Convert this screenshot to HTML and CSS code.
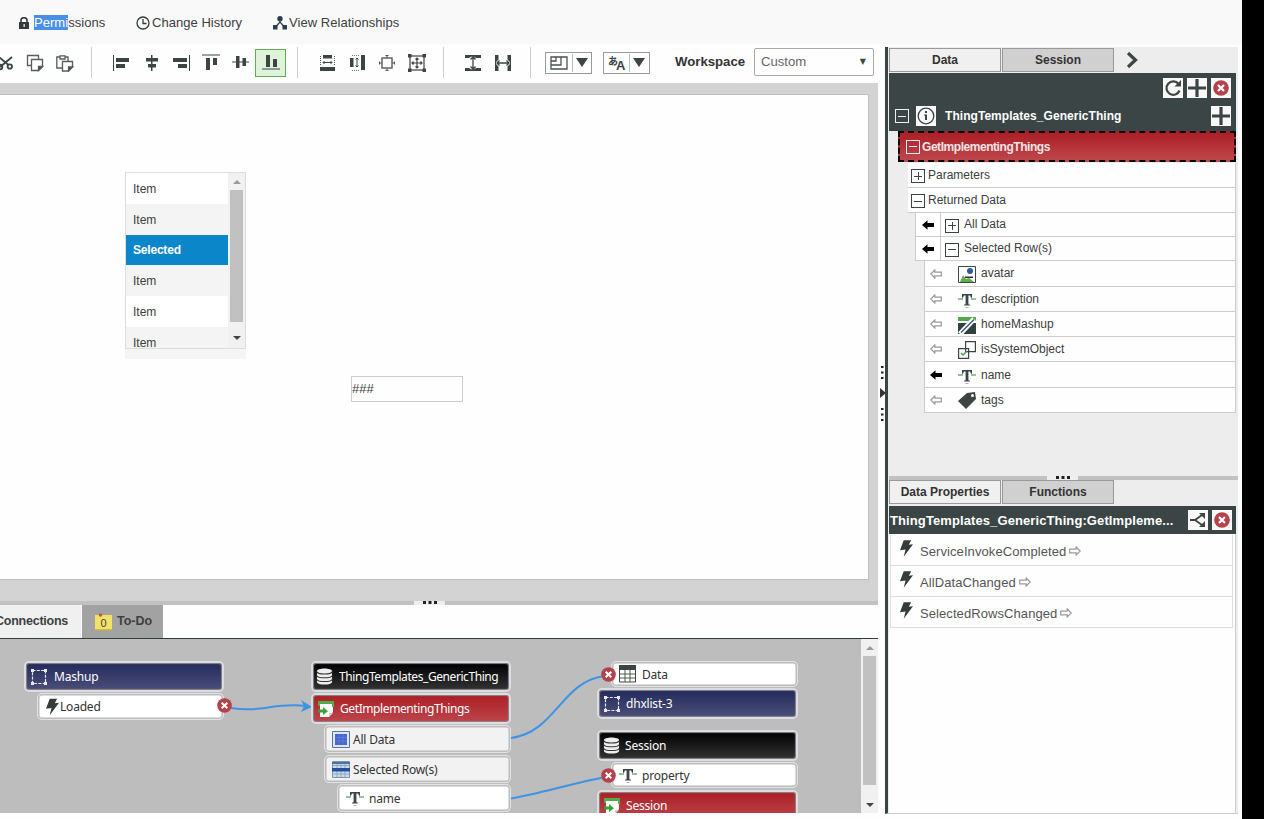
FILE: index.html
```html
<!DOCTYPE html>
<html lang="en">
<head>
  <meta charset="UTF-8" />
  <meta name="viewport" content="width=device-width, initial-scale=1" />
  <title>Mashup Builder</title>
  <link rel="stylesheet" href="styles.css">
</head>
<body>
  <!-- Shared icons -->
  <svg class="sprite" aria-hidden="true">
    <symbol id="i-close" viewBox="0 0 16 16"><circle cx="8" cy="8" r="7.8" fill="#b5414b"/><path d="M5 5l6 6M11 5l-6 6" stroke="#fff" stroke-width="2.2"/></symbol>
    <symbol id="i-plus" viewBox="0 0 20 20"><path d="M1 10h18M10 1v18" stroke="#3c4444" stroke-width="3.2"/></symbol>
    <symbol id="i-bolt" viewBox="0 0 14 18"><path d="M4 0h8L9.500 5l4.500-.6L4 18l2-8-6 1z" fill="#333b3d"/></symbol>
    <symbol id="i-text" viewBox="0 0 18 16"><path d="M0 7h5M13 7h5" stroke="#7fa878" stroke-width="1.400"/><path d="M4 2h10v3.800h-1l-.9-2.200h-1.700v8.600l1.600.5v.9H6v-.9l1.600-.5V3.600H5.900L5 5.800H4z" fill="#3b4547"/><path d="M7.500 15.500h3" stroke="#aaa"/></symbol>
    <symbol id="i-left" viewBox="0 0 12 10"><path d="M0 5l5.500-4.800V3H12v4H5.500v2.800z" fill="#000"/></symbol>
    <symbol id="i-left-o" viewBox="0 0 12 10"><path d="M.8 5l4-4v2.200h6.500v3.600H4.800V9z" fill="#fff" stroke="#999" stroke-width="1.200"/></symbol>
    <symbol id="i-right-o" viewBox="0 0 12 10"><path d="M11.200 5l-4-4v2.200H.7v3.600h6.500V9z" fill="#fff" stroke="#999" stroke-width="1.200"/></symbol>
    <symbol id="i-db" viewBox="0 0 18 18"><path d="M1 3.500C1-.3 17-.3 17 3.500v11c0 4-16 4-16 0z" fill="#eee"/><path d="M1 4c1 3.200 15 3.200 16 0M1 8c1 3.200 15 3.200 16 0M1 12c1 3.200 15 3.200 16 0" fill="none" stroke="#333" stroke-width="1.100"/></symbol>
    <symbol id="i-frame" viewBox="0 0 16 16"><rect x="1.500" y="1.500" width="13" height="13" fill="none" stroke="#e8e8f4" stroke-width="1.200" stroke-dasharray="3 1.300"/><path d="M0 0h3v3H0zM13 0h3v3h-3zM0 13h3v3H0zM13 13h3v3h-3z" fill="#e8e8f4"/></symbol>
    <symbol id="i-service" viewBox="0 0 18 18"><path d="M3 1h13v11l-4 5H3z" fill="#fff"/><path d="M1 1h16v6h-2V4H3v2H1z" fill="#4fae48"/><path d="M1 9.500h5V7l5 4.200L6 15v-2.500H1z" fill="#36a537"/><path d="M12 17v-4h4z" fill="#ccc"/></symbol>
    <symbol id="i-dot3" viewBox="0 0 14 3"><path d="M0 0h3v3H0zM5.500 0h3v3h-3zM11 0h3v3h-3z" fill="#222"/></symbol>
  </svg>

  <div class="app">
    <header class="topbar">
      <a class="toplink permissions">
        <svg width="10" height="12" viewBox="0 0 10 12"><path d="M2 5V3.500C2-.2 8-.2 8 3.500V5" fill="none" stroke="#333" stroke-width="1.500"/><path d="M0 5h10v7H0z" fill="#333b3d"/><path d="M4.500 7h1.300v3H4.500z" fill="#eee"/></svg>
        <span><mark>Permi</mark>ssions</span>
      </a>
      <a class="toplink history">
        <svg width="14" height="14" viewBox="0 0 14 14" fill="none" stroke="#333b3d" stroke-width="1.300"><circle cx="7" cy="7" r="6"/><path d="M7 3v4.500h3.500"/></svg>
        <span>Change History</span>
      </a>
      <a class="toplink relations">
        <svg width="14" height="14" viewBox="0 0 14 14"><path d="M7 3v4M2.500 11L7 6l4.500 5" stroke="#3b4555" stroke-width="1.400" fill="none"/><circle cx="7" cy="2.800" r="2.700" fill="#2d3a4f"/><path d="M0 9h4.500v4.500H0zM9.500 9H14v4.500H9.500z" fill="#2d3a4f"/></svg>
        <span>View Relationships</span>
      </a>
    </header>

    <div class="workarea">
      <section class="builder">
        <div class="toolbar">
          <div class="tools first">
            <button class="tool"><svg width="18" height="18" viewBox="0 0 18 18" fill="none" stroke="#3c4444" stroke-width="1.800"><path d="M3 3l9.500 8M4 13L16 3"/><circle cx="13.800" cy="12.500" r="2.200"/><circle cx="4" cy="13" r="2.300"/></svg></button>
            <button class="tool"><svg width="18" height="18" viewBox="0 0 18 18" fill="#fff" stroke="#555d5e" stroke-width="1.300"><path d="M1.500 1.500h11v10h-11z"/><path d="M5.500 5.500h11v7l-4 4h-7z"/><path d="M12.500 16.500v-4h4z" fill="#3c4444"/></svg></button>
            <button class="tool"><svg width="18" height="18" viewBox="0 0 18 18" fill="#fff" stroke="#555d5e" stroke-width="1.300"><path d="M4 3H.8v11H6M9 3h3v4"/><path d="M4 1.800h5V5H4z"/><path d="M6.500 7.500h10v5.500l-4 4h-6z"/><path d="M12.500 17v-4h4z" fill="#3c4444"/></svg></button>
          </div>
          <div class="tools">
            <button class="tool"><svg width="18" height="18" viewBox="0 0 18 18" fill="#3c4444"><path d="M1 1h1v16H1zM4 4h13v4H4zM4 10h9v4H4z"/></svg></button>
            <button class="tool"><svg width="18" height="18" viewBox="0 0 18 18" fill="#3c4444"><path d="M9 1h1.500v16H9zM4 4h12v3.500H4zM6 10h8v3.500H6z"/></svg></button>
            <button class="tool"><svg width="18" height="18" viewBox="0 0 18 18" fill="#3c4444"><path d="M17 1h1v16h-1zM1 4h14v4H1zM6 10h9v4H6z"/></svg></button>
            <button class="tool"><svg width="18" height="18" viewBox="0 0 18 18" fill="#3c4444"><path d="M0 .5h18v1H0zM4 4h4v12H4zM11 4h4v7h-4z"/></svg></button>
            <button class="tool"><svg width="18" height="18" viewBox="0 0 18 18" fill="#3c4444"><path d="M0 7.500h17v1H0zM4 2h3.500v12H4zM10.500 4H14v8h-3.500z"/></svg></button>
            <button class="tool active"><svg width="18" height="18" viewBox="0 0 18 18" fill="#3c4444"><path d="M0 14.500h18v1H0zM4 1h4v12H4zM11 5h4v8h-4z"/></svg></button>
          </div>
          <div class="tools">
            <button class="tool"><svg width="18" height="18" viewBox="0 0 18 18"><path d="M5 1h9v3.500H5zM2 13h15v4H2z" fill="#3c4444"/><path d="M2.500 2v10M16.500 2v10" stroke="#555" stroke-dasharray="1 1"/><path d="M5 8.500h9M6.500 7L5 8.500 6.500 10M12.500 7L14 8.500 12.500 10" fill="none" stroke="#3c4444"/></svg></button>
            <button class="tool"><svg width="18" height="18" viewBox="0 0 18 18"><path d="M2 4h3.500v9H2zM13 1h4v15h-4z" fill="#3c4444"/><path d="M4 1.500h8M4 16.500h8" stroke="#777" stroke-dasharray="1 1"/><path d="M9 4v9M7.500 5.500L9 4l1.500 1.500M7.500 11.500L9 13l1.500-1.500" fill="none" stroke="#3c4444"/></svg></button>
            <button class="tool"><svg width="18" height="18" viewBox="0 0 18 18"><path d="M4 4h10v10H4z" fill="none" stroke="#666" stroke-width="1.500"/><path d="M9 1v3M9 14v3M1 9h3M14 9h3M7.500 1.500h3M7.500 16.500h3M1.500 7.500v3M16.500 7.500v3" stroke="#555"/></svg></button>
            <button class="tool"><svg width="18" height="18" viewBox="0 0 18 18"><path d="M2 2h14v14H2z" fill="none" stroke="#666" stroke-width="1.500"/><path d="M0 0h3.500v3.500H0zM14.500 0H18v3.500h-3.500zM0 14.500h3.500V18H0zM14.500 14.500H18V18h-3.500z" fill="#3c4444"/><path d="M9 4v10M4 9h10M7.500 5.500L9 4l1.500 1.500M7.500 12.500L9 14l1.500-1.500M5.500 7.500L4 9l1.500 1.500M12.500 7.500L14 9l-1.500 1.500" fill="none" stroke="#3c4444" stroke-width="1.200"/></svg></button>
          </div>
          <div class="tools">
            <button class="tool"><svg width="18" height="18" viewBox="0 0 18 18"><path d="M1 1h16v3h-4.500M1 1v3h4.500M1 17h16v-3h-4.500M1 17v-3h4.500" fill="#555d5e"/><path d="M1 1h16v3h-4L10 2H8L5 4H1zM1 17h16v-3h-4l-3 2H8l-3-2H1z" fill="#3c4444"/><path d="M9 3v12M6.500 5.500L9 3l2.500 2.500M6.500 12.500L9 15l2.500-2.500" fill="none" stroke="#3c4444" stroke-width="1.300"/></svg></button>
            <button class="tool"><svg width="18" height="18" viewBox="0 0 18 18"><path d="M1 1h3.500v4.500L2 8v2l2.500 2.500V17H1zM17 1h-3.500v4.500L16 8v2l-2.500 2.500V17H17z" fill="#3c4444"/><path d="M3 9h12M5.500 6.500L3 9l2.500 2.500M12.500 6.500L15 9l-2.500 2.500" fill="none" stroke="#3c4444" stroke-width="1.300"/></svg></button>
          </div>
          <div class="tools drops">
            <button class="drop">
              <svg width="18" height="14" viewBox="0 0 18 14" fill="none" stroke="#4a5253" stroke-width="1.300"><path d="M1 1h16v12H1z"/><path d="M1 5h5V1M1 9h10V1"/></svg>
              <i></i><b></b>
            </button>
            <button class="drop lang">
              <span>あ</span><span class="latin">A</span>
              <i></i><b></b>
            </button>
          </div>
          <label class="workspace-label">Workspace</label>
          <div class="workspace-select"><span>Custom</span><span class="caret">▼</span></div>
        </div>

        <div class="canvas-wrap">
          <div class="canvas">
            <div class="list-widget">
              <div class="list-view">
                <ul class="items">
                  <li>Item</li>
                  <li>Item</li>
                  <li class="selected">Selected</li>
                  <li>Item</li>
                  <li>Item</li>
                  <li>Item</li>
                </ul>
                <div class="scrollbar"><span class="up"></span><span class="thumb"></span><span class="down"></span></div>
              </div>
            </div>
            <div class="value-widget">###</div>
          </div>
        </div>
        <div class="splitter"><span class="grip"><svg width="14" height="3"><use href="#i-dot3"/></svg></span></div>

        <nav class="bottom-tabs">
          <a class="tab-connections">Connections</a>
          <a class="tab-todo"><svg width="17" height="18" viewBox="0 0 17 18"><path d="M0 2h17v15H0z" fill="#f3e267"/><path d="M0 16h17v1.500H0z" fill="#c9b84b"/><circle cx="5.500" cy="2" r="1.800" fill="#c65b3c"/><text x="5.500" y="14" class="note-count">0</text></svg><span>To-Do</span></a>
        </nav>

        <div class="connections">
          <div class="diagram">
            <svg class="wires" width="861" height="174" viewBox="0 0 861 174" fill="none" stroke="#3f93e6" stroke-width="2">
              <path d="M231 69c30 5 45-6 75-2"/>
              <path d="M301 61l11 7-11 5 3-6z" fill="#3f93e6" stroke="none"/>
              <path d="M511 99c45-6 50-56 93-62"/>
              <path d="M511 159.500c30-5 60-15 93-21"/>
            </svg>
            <div class="node head navy n-mashup"><svg width="16" height="16"><use href="#i-frame"/></svg>Mashup</div>
            <div class="node n-loaded"><svg width="13" height="18"><use href="#i-bolt"/></svg>Loaded</div>
            <div class="node head black n-thing"><svg width="17" height="17"><use href="#i-db"/></svg><span>ThingTemplates_GenericThing</span></div>
            <div class="node head red n-get"><svg width="18" height="18"><use href="#i-service"/></svg>GetImplementingThings</div>
            <div class="node pale n-all"><svg width="18" height="17" viewBox="0 0 18 17"><path d="M.5.500h17v16H.5z" fill="#dce7fb" stroke="#5673a5"/><path d="M3 3h12v11H3z" fill="#4866ce"/><path d="M3 6.500h12M3 10h12M7 3v11M11 3v11" stroke="#6d88e0" stroke-width=".6"/></svg>All Data</div>
            <div class="node pale n-rows"><svg width="18" height="17" viewBox="0 0 18 17"><path d="M.5.500h17v16H.5z" fill="#c9dcea" stroke="#7c94ad"/><path d="M1 4.500h16M1 13h16M5 1v15M9 1v15M13 1v15" stroke="#8fa9bd"/><path d="M0 1h18v2H0z" fill="#4c72a8"/><path d="M0 7h18v3.500H0z" fill="#244f9e"/></svg>Selected Row(s)</div>
            <div class="node n-name"><svg width="18" height="16"><use href="#i-text"/></svg>name</div>
            <div class="node n-data"><svg width="17" height="18" viewBox="0 0 17 18"><path d="M.5 1h16v16H.5z" fill="#fff" stroke="#3c4444"/><path d="M0 0h17v5H0z" fill="#3c4444"/><path d="M1 9h15M1 13h15M6 5v12M11 5v12" stroke="#4b5b4b"/></svg>Data</div>
            <div class="node head navy n-list"><svg width="16" height="16"><use href="#i-frame"/></svg>dhxlist-3</div>
            <div class="node head black n-session"><svg width="17" height="17"><use href="#i-db"/></svg>Session</div>
            <div class="node n-property"><svg width="18" height="16"><use href="#i-text"/></svg>property</div>
            <div class="node head red n-session2"><svg width="18" height="18"><use href="#i-service"/></svg>Session</div>
            <svg class="unlink u-loaded"><use href="#i-close"/></svg>
            <svg class="unlink u-data"><use href="#i-close"/></svg>
            <svg class="unlink u-property"><use href="#i-close"/></svg>
          </div>
          <div class="scrollbar"><span class="up"></span><span class="thumb"></span><span class="down"></span></div>
        </div>
        <div class="side-grip">
          <svg width="6" height="56" viewBox="0 0 6 56"><path d="M1 1h2.500v2H1zM1 6.500h2.500v2H1zM1 12h2.500v2H1zM1 43h2.500v2H1zM1 48.500h2.500v2H1zM1 54h2.500v2H1z" fill="#222"/><path d="M0 23l6 5-6 5z" fill="#3b3333"/></svg>
        </div>
      </section>

      <aside class="panel">
        <div class="data-pane">
          <nav class="tabs">
            <a class="tab current">Data</a>
            <a class="tab">Session</a>
            <svg class="more" width="12" height="16" viewBox="0 0 12 16"><path d="M2 1l7.500 7L2 15" fill="none" stroke="#3c4444" stroke-width="3.200"/></svg>
          </nav>
          <div class="dark-head">
            <div class="actions">
              <button class="sq"><svg width="18" height="18" viewBox="0 0 18 18"><path d="M15.500 11.500A6.700 6.700 0 1 1 14.500 5" fill="none" stroke="#3c4444" stroke-width="2.200"/><path d="M17 1v6.500h-6.500z" fill="#3c4444"/></svg></button>
              <button class="sq"><svg width="20" height="20"><use href="#i-plus"/></svg></button>
              <button class="sq"><svg width="16" height="16"><use href="#i-close"/></svg></button>
            </div>
            <div class="thing">
              <span class="box light"></span>
              <span class="sq info"><svg width="18" height="18" viewBox="0 0 18 18"><circle cx="9" cy="9" r="7.800" fill="none" stroke="#3c4444" stroke-width="1.300"/><path d="M8 4h2v2H8zM7 7.500h3V13H8V8.500H7z" fill="#3c4444"/></svg></span>
              <span class="thing-name">ThingTemplates_GenericThing</span>
              <button class="sq"><svg width="20" height="20"><use href="#i-plus"/></svg></button>
            </div>
          </div>
          <div class="service"><span class="box light"></span>GetImplementingThings</div>
          <div class="tree">
            <div class="row group"><span class="box plus"></span>Parameters</div>
            <div class="row group"><span class="box"></span>Returned Data</div>
            <div class="row sub"><span class="arrow"><svg width="12" height="10"><use href="#i-left"/></svg></span><span class="box plus"></span><span class="label">All Data</span></div>
            <div class="row sub"><span class="arrow"><svg width="12" height="10"><use href="#i-left"/></svg></span><span class="box"></span><span class="label">Selected Row(s)</span></div>
            <div class="row field tall"><svg class="bind" width="12" height="10"><use href="#i-left-o"/></svg><svg class="type" width="18" height="17" viewBox="0 0 18 17"><path d="M.5.500h17v16H.5z" fill="#fff" stroke="#3c4444"/><path d="M2 16l3-7 3 4 3-1 5 4z" fill="#5fae4c"/><circle cx="12" cy="5" r="3" fill="#2b5c93"/><path d="M7 10.500h8V12H7z" fill="#333"/></svg><span class="label">avatar</span></div>
            <div class="row field"><svg class="bind" width="12" height="10"><use href="#i-left-o"/></svg><svg class="type" width="18" height="16"><use href="#i-text"/></svg>description</div>
            <div class="row field"><svg class="bind" width="12" height="10"><use href="#i-left-o"/></svg><svg class="type" width="18" height="17" viewBox="0 0 18 17"><path d="M0 0h18v4H0z" fill="#55aa48"/><path d="M0 6h18v11H0z" fill="#34403f"/><path d="M2 17L16 2" stroke="#fff" stroke-width="5"/><path d="M3 15.500L16 2.500" stroke="#34518b" stroke-width="1.500"/></svg>homeMashup</div>
            <div class="row field"><svg class="bind" width="12" height="10"><use href="#i-left-o"/></svg><svg class="type" width="18" height="18" viewBox="0 0 18 18" fill="#fff" stroke="#3c4444" stroke-width="1.200"><path d="M7.600.6h9.800v10H7.600zM.6 7.600h10v9.800H.6z"/><path d="M3 12l2 2 4-4" fill="none" stroke="#4ba443" stroke-width="1.500"/></svg>isSystemObject</div>
            <div class="row field tall"><svg class="bind" width="12" height="10"><use href="#i-left"/></svg><svg class="type" width="18" height="16"><use href="#i-text"/></svg>name</div>
            <div class="row field"><svg class="bind" width="12" height="10"><use href="#i-left-o"/></svg><svg class="type" width="18" height="18" viewBox="0 0 18 18"><path d="M0 9l9-8 8-1 1 7-10 10z" fill="#3c4444"/><circle cx="14.500" cy="3.500" r="1.500" fill="#fff"/></svg>tags</div>
          </div>
        </div>

        <div class="splitter"><span class="grip"><svg width="14" height="3"><use href="#i-dot3"/></svg></span></div>

        <div class="functions-pane">
          <nav class="tabs">
            <a class="tab current">Data Properties</a>
            <a class="tab">Functions</a>
          </nav>
          <div class="dark-title">
            <span class="title-text">ThingTemplates_GenericThing:GetImpleme...</span>
            <button class="sq"><svg width="16" height="16" viewBox="0 0 16 16"><path d="M0 8h5l7-5M5 8l7 5" fill="none" stroke="#3c4444" stroke-width="1.800"/><path d="M9 1h6v6zM9 15h6V9z" fill="#3c4444"/></svg></button>
            <button class="sq"><svg width="16" height="16"><use href="#i-close"/></svg></button>
          </div>
          <div class="events">
            <div class="event"><svg width="13" height="17"><use href="#i-bolt"/></svg><span>ServiceInvokeCompleted</span><svg width="12" height="10"><use href="#i-right-o"/></svg></div>
            <div class="event"><svg width="13" height="17"><use href="#i-bolt"/></svg><span>AllDataChanged</span><svg width="12" height="10"><use href="#i-right-o"/></svg></div>
            <div class="event"><svg width="13" height="17"><use href="#i-bolt"/></svg><span>SelectedRowsChanged</span><svg width="12" height="10"><use href="#i-right-o"/></svg></div>
          </div>
        </div>
      </aside>
    </div>
  </div>
</body>
</html>
```
FILE: styles.css
```css
* {
  box-sizing: border-box;
}
body {
  margin: 0;
  background: #000;
  font-family: "Liberation Sans", Arial, sans-serif;
  font-size: 12px;
  color: #3c4040;
  overflow: hidden;
}
button {
  border: 0;
  padding: 0;
  background: none;
  font: inherit;
}
svg {
  flex: none;
  display: block;
}
.sprite {
  display: none;
}
.app {
  width: 1242px;
  height: 819px;
  background: #fefefe;
  display: flex;
  flex-direction: column;
}

/* Top links */
.topbar {
  height: 44px;
  flex: none;
  background: #f9f9f9;
  display: flex;
  padding-left: 19px;
}
.toplink {
  display: flex;
  align-items: center;
  height: 45px;
  font-size: 13px;
  letter-spacing: 0.040px;
  white-space: nowrap;
}
.permissions {
  width: 117px;
  gap: 5px;
}
.history {
  width: 137px;
  gap: 2px;
}
.relations {
  gap: 2px;
}
mark {
  background: #4a8fe7;
  color: #fff;
}

.workarea {
  flex: 1;
  display: flex;
  min-height: 0;
}
.builder {
  width: 885px;
  display: flex;
  flex-direction: column;
  position: relative;
}

/* Toolbar */
.toolbar {
  height: 39px;
  flex: none;
  display: flex;
  align-items: flex-start;
  padding-top: 3px;
}
.tools {
  display: flex;
  height: 31px;
  align-items: center;
  margin-left: 11px;
  padding-left: 14px;
  border-left: 1px solid #ccc;
}
.tools.first {
  margin-left: -10px;
  padding: 0;
  border: 0;
}
.tool {
  width: 30px;
  height: 28px;
  display: flex;
  align-items: center;
  justify-content: center;
}
.tool.active {
  width: 31px;
  margin: 0 0 0 -1px;
  background: #dff3da;
  border: 1px solid #5fae4c;
}
.drops {
  gap: 11px;
  margin-left: 12px;
}
.drop {
  width: 47px;
  height: 22px;
  border: 1px solid #999;
  display: flex;
  align-items: center;
  padding-left: 4px;
  color: #3c4444;
}
.drop i {
  height: 18px;
  border-left: 1px solid #bbb;
  margin: 0 3px 0 4px;
}
.drop b {
  border: 6.5px solid transparent;
  border-top: 9px solid #3c4444;
  border-bottom: 0;
}
.lang span {
  font: bold 10px/10px "Noto Sans CJK JP", sans-serif;
  margin-top: -4px;
}
.lang .latin {
  font: bold 13px/13px "Liberation Sans", sans-serif;
  margin: 6px 0 0 -2px;
}
.workspace-label {
  margin-left: 25px;
  width: 79px;
  line-height: 30px;
  font-size: 13.2px;
  font-weight: bold;
  color: #333;
}
.workspace-select {
  width: 120px;
  height: 28px;
  margin-top: 1px;
  border: 1px solid #aaa;
  border-radius: 2px;
  display: flex;
  align-items: center;
  justify-content: space-between;
  padding: 0 7px 2px 6px;
  font-size: 13.1px;
  color: #666;
}
.caret {
  font: 8px "DejaVu Sans", sans-serif;
  color: #444;
}

/* Design canvas */
.canvas-wrap {
  width: 878px;
  height: 518px;
  flex: none;
  background: #d3d3d3;
  padding-top: 11px;
}
.canvas {
  width: 869px;
  height: 486px;
  border: solid #bfbfbf;
  border-width: 1px 1px 1px 0;
  background: #fefefe;
  position: relative;
}
.list-widget {
  position: absolute;
  left: 125px;
  top: 77px;
  width: 121px;
  height: 187px;
  background: #f5f5f5;
}
.list-view {
  height: 177px;
  border: 1px solid #ddd;
  display: flex;
  overflow: hidden;
}
.items {
  list-style: none;
  margin: 0;
  padding: 0;
  width: 102px;
}
.items li {
  height: 30.800px;
  line-height: 32px;
  padding-left: 7px;
  background: #fff;
}
.items li:nth-child(even) {
  background: #f4f4f4;
}
.items .selected {
  background: #0b87c9;
  color: #fff;
  font-weight: bold;
  line-height: 30px;
  letter-spacing: -0.200px;
}
.scrollbar {
  flex: 1;
  background: #f1f1f1;
  display: flex;
  flex-direction: column;
  align-items: center;
}
.up {
  border: 4px solid transparent;
  border-bottom-color: #999;
  border-top: 0;
  margin: 7px 0 6px;
}
.down {
  border: 4px solid transparent;
  border-top-color: #444;
  border-bottom: 0;
}
.thumb {
  width: 13px;
  background: #c1c1c1;
}
.list-view .thumb {
  height: 132px;
  margin-bottom: 14px;
}
.value-widget {
  position: absolute;
  left: 351px;
  top: 281px;
  width: 112px;
  height: 26px;
  border: 1px solid #ccc;
  line-height: 23px;
  font-size: 13px;
}

/* Splitters */
.splitter {
  height: 4px;
  width: 878px;
  flex: none;
  background: #c1c1c1;
  display: flex;
}
.grip {
  width: 31px;
  height: 4px;
  margin-left: 414px;
  background: #eee;
  display: flex;
  justify-content: center;
}
.side-grip {
  position: absolute;
  left: 880px;
  top: 321px;
}

/* Connections */
.bottom-tabs {
  height: 34px;
  width: 878px;
  flex: none;
  display: flex;
  border-bottom: 1px solid #333b3d;
  font-size: 12.5px;
  font-weight: bold;
  line-height: 33px;
}
.tab-connections {
  width: 81px;
  padding-right: 13px;
  background: #f0f0f0;
  display: flex;
  justify-content: flex-end;
  letter-spacing: -0.250px;
}
.tab-todo {
  width: 81px;
  margin-left: 1px;
  padding-left: 13px;
  background: #a2a2a2;
  display: flex;
  align-items: center;
  gap: 5px;
}
.note-count {
  font-size: 11px;
  font-weight: normal;
  fill: #444;
}
.connections {
  width: 878px;
  height: 174px;
  display: flex;
}
.diagram {
  width: 861px;
  background: #bdbdbd;
  position: relative;
  overflow: hidden;
}
.connections .thumb {
  height: 129px;
  margin-bottom: 18px;
}
.node {
  position: absolute;
  height: 28px;
  width: 187px;
  border: 1px solid #e2e2e2;
  border-radius: 5px;
  box-shadow: inset 0 0 0 1.500px #bcbcbc;
  background: #fff;
  display: flex;
  align-items: center;
  padding-left: 14px;
  font-family: "Noto Sans", "Open Sans", sans-serif;
  font-size: 12px;
  letter-spacing: -0.200px;
  color: #333;
  white-space: nowrap;
}
.head {
  width: 200px;
  height: 31px;
  border: 2px solid #dcdce2;
  box-shadow: inset 0 0 1px 1px #888;
  color: #fff;
  padding-left: 5px;
}
.navy {
  background: linear-gradient(#232a5b, #4b4e78);
}
.black {
  background: linear-gradient(#000, #333);
}
.red {
  background: linear-gradient(#ab1e25, #bd464b);
}
.pale {
  background: #f2f2f2;
}
.n-mashup { left: 24px; top: 22px; gap: 7px; }
.n-loaded { left: 37px; top: 54px; height: 27px; padding-left: 8px; gap: 1px; }
.n-thing { left: 311px; top: 22px; padding-left: 3px; gap: 6px; letter-spacing: -0.420px; }
.n-get { left: 311px; top: 54px; padding-left: 4px; gap: 5px; letter-spacing: -0.400px; }
.n-all { left: 324px; top: 86px; padding-left: 7px; gap: 3px; }
.n-rows { left: 324px; top: 116px; padding-left: 7px; gap: 3px; }
.n-name { left: 337px; top: 145px; width: 174px; padding-left: 8px; gap: 5px; }
.n-data { left: 611px; top: 22px; height: 26px; padding-left: 7px; gap: 6px; }
.n-list { left: 597px; top: 49px; width: 201px; gap: 6px; }
.n-session { left: 597px; top: 91px; width: 201px; padding-left: 4px; gap: 5px; }
.n-property { left: 611px; top: 123px; height: 26px; padding-left: 7px; gap: 5px; }
.n-session2 { left: 597px; top: 151px; width: 201px; padding-left: 4px; gap: 5px; }
.unlink {
  position: absolute;
  width: 15px;
  height: 15px;
}
.u-loaded { left: 217px; top: 59px; }
.u-data { left: 601px; top: 28px; }
.u-property { left: 601px; top: 129px; }

/* Right panel */
.panel {
  width: 353px;
  height: 767px;
  margin-top: 3px;
  border-left: 3px solid #3b4545;
  border-bottom: 1px solid #ccc;
  padding-left: 1px;
  background: #ededed;
}
.data-pane {
  height: 429px;
  padding-right: 2px;
}
.tabs {
  display: flex;
  height: 26px;
  padding-top: 1px;
  gap: 1px;
}
.tab {
  width: 112px;
  height: 24px;
  border: 1px solid #999;
  background: #d0d0d0;
  text-align: center;
  line-height: 22px;
  font-size: 12px;
  font-weight: bold;
  color: #333;
}
.tab.current {
  background: #f0f0f0;
}
.more {
  margin: 4px 0 0 11px;
}
.dark-head {
  height: 58px;
  background: #3b4545;
}
.actions {
  display: flex;
  justify-content: flex-end;
  gap: 4px;
  padding: 5px 5px 0 0;
}
.sq {
  width: 20px;
  height: 20px;
  flex: none;
  background: #f8f8f8;
  display: flex;
  align-items: center;
  justify-content: center;
}
.thing {
  display: flex;
  align-items: center;
  padding: 8px 5px 0 6px;
}
.thing-name {
  flex: 1;
  color: #fff;
  font-weight: bold;
  letter-spacing: 0.050px;
}
.info {
  margin: 0 9px 0 7px;
}
.box {
  width: 14px;
  height: 14px;
  flex: none;
  border: 1.500px solid #3c4444;
  background: linear-gradient(#3c4444, #3c4444) center / 8px 1px no-repeat;
}
.box.plus {
  background: linear-gradient(#3c4444, #3c4444) center / 8px 1px no-repeat, linear-gradient(#3c4444, #3c4444) center / 1px 8px no-repeat;
}
.box.light {
  border-color: #eee;
  background-image: linear-gradient(#eee, #eee);
}
.service {
  height: 31px;
  margin: 0 0 1px 9px;
  border: 2px dashed #000;
  background: linear-gradient(#ab1c24, #bf4a4e) border-box;
  color: #f3e4e4;
  font-weight: bold;
  letter-spacing: -0.450px;
  display: flex;
  align-items: center;
  gap: 2px;
  padding-left: 6px;
}
.tree .row {
  height: 25px;
  display: flex;
  align-items: center;
  background: #fefefe;
  border: solid #ccc;
  border-width: 0 1px 1px;
}
.tree .group {
  margin-left: 18px;
  padding-left: 3px;
  border-left-color: #eee;
  gap: 3px;
}
.tree .sub {
  height: 24px;
  margin-left: 26px;
}
.row .box {
  margin-top: 2px;
}
.sub .box {
  margin: 2px 5px 0 4px;
}
.label {
  margin-top: -2px;
}
.arrow {
  width: 25px;
  height: 100%;
  border-right: 1px solid #ccc;
  display: flex;
  align-items: center;
  justify-content: center;
}
.tree .field {
  margin-left: 35px;
  padding-left: 5px;
}
.tree .tall {
  height: 26px;
}
.type {
  margin: 2px 5px 0 16px;
}
.panel .splitter {
  width: 349px;
}
.panel .grip {
  margin-left: 158px;
}

.functions-pane {
  height: 333px;
}
.functions-pane .tabs {
  padding: 0;
}
.dark-title {
  height: 28px;
  margin-right: 2px;
  background: #3b4545;
  display: flex;
  align-items: center;
  gap: 4px;
  padding: 0 4px 0 1px;
}
.title-text {
  flex: 1;
  color: #fff;
  font-size: 13px;
  font-weight: bold;
  letter-spacing: 0.100px;
  white-space: nowrap;
}
.events {
  height: 279px;
  margin-right: 2px;
  padding: 1px 2px 0 1px;
  background: #fefefe;
  border-right: 1px solid #ccc;
}
.event {
  height: 31px;
  border: 1px solid #ddd;
  border-top: 0;
  display: flex;
  align-items: center;
  padding-left: 9px;
  font-size: 13px;
  letter-spacing: 0.080px;
  color: #555;
}
.event span {
  margin: 3px 3px 0 7px;
}
.event svg:last-child {
  margin-top: 2px;
}
.event svg:first-child {
  margin-top: -3px;
}
```
